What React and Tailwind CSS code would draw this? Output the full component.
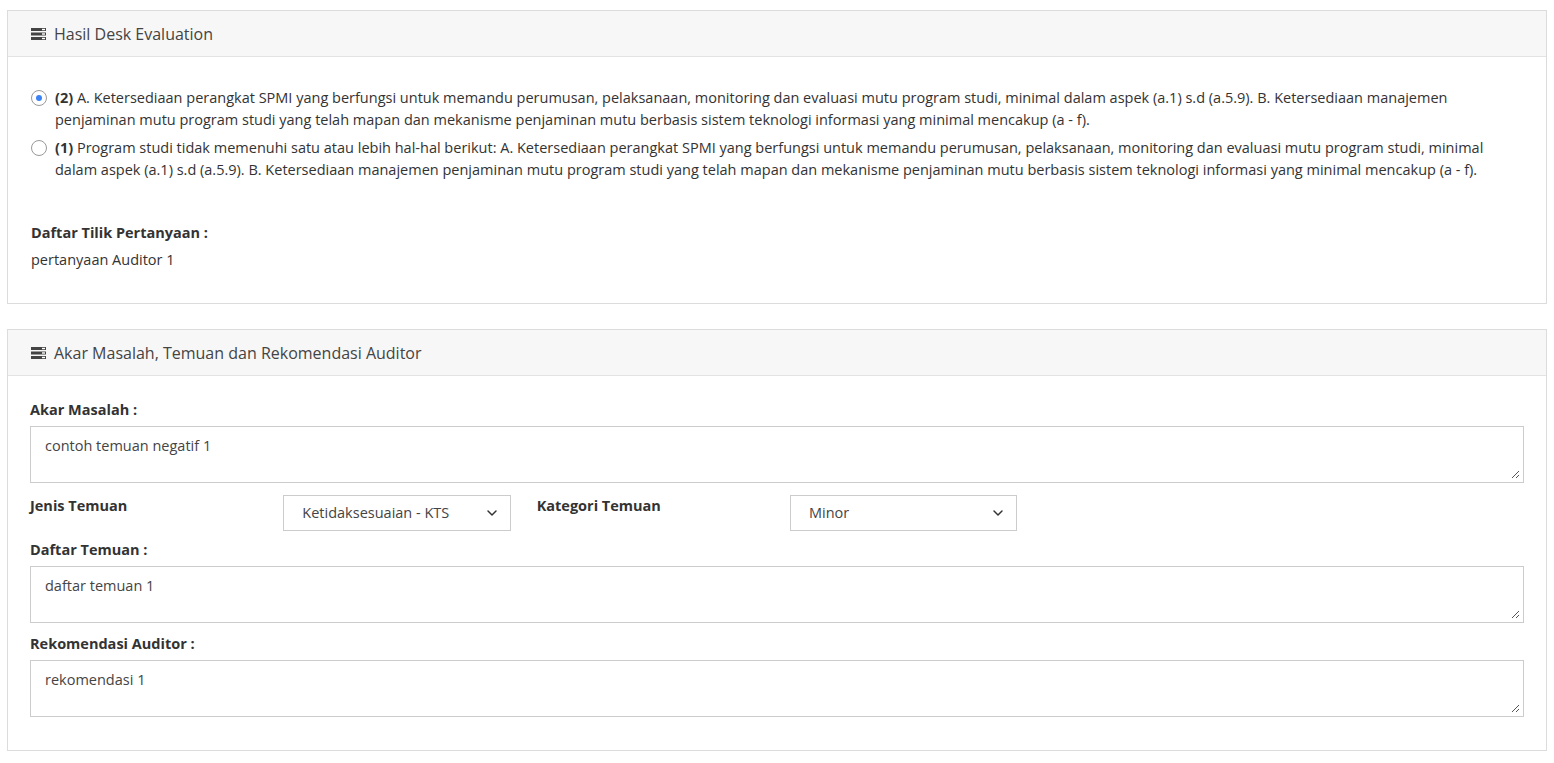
import { ChevronDown } from "lucide-react";

function ListIcon() {
  return (
    <svg width="15" height="12" viewBox="0 0 15 12" className="mr-2 shrink-0">
      <rect x="0" y="0" width="15" height="3" fill="#444" />
      <rect x="0" y="4.5" width="15" height="3" fill="#444" />
      <rect x="0" y="9" width="15" height="3" fill="#444" />
      <rect x="11" y="0.8" width="3" height="1.4" fill="#fff" />
      <rect x="11" y="5.3" width="3" height="1.4" fill="#fff" />
      <rect x="11" y="9.8" width="3" height="1.4" fill="#fff" />
    </svg>
  );
}

function Card({ title, children, className }) {
  return (
    <div className={`mx-[7px] border border-[#dcdcdc] bg-white ${className || ""}`}>
      <div className="flex h-[46px] items-center border-b border-[#e3e3e3] bg-[#f7f7f7] px-[23px] text-[16px] text-[#444]">
        <ListIcon />
        {title}
      </div>
      {children}
    </div>
  );
}

function Radio({ checked, num, text }) {
  return (
    <div className="flex items-start">
      <span className="mr-[8px] mt-[3px] flex h-[16px] w-[16px] shrink-0 items-center justify-center rounded-full border border-[#999] bg-white">
        {checked && <span className="h-[6px] w-[6px] rounded-full bg-[#3b82f6]" />}
      </span>
      <p>
        <span className="font-bold">({num})</span> {text}
      </p>
    </div>
  );
}

function TextArea({ value }) {
  return (
    <div className="relative h-[57px] border border-[#ccc] px-[14px] py-[8px] text-[#444]">
      {value}
      <svg width="9" height="9" viewBox="0 0 9 9" className="absolute bottom-[3px] right-[3px]">
        <path d="M8 1L1 8M8 5L5 8" stroke="#555" strokeWidth="1" />
      </svg>
    </div>
  );
}

function Select({ value }) {
  return (
    <div className="flex h-[36px] items-center justify-between border border-[#ccc] pl-[18px] pr-[10px] text-[#444]">
      {value}
      <ChevronDown size={16} strokeWidth={2.2} className="text-[#333]" />
    </div>
  );
}

export default function App() {
  return (
    <div
      className="bg-white pt-[10px] pb-[12px] text-[14.5px] leading-[22px] text-[#333]"
      style={{ fontFamily: '"Open Sans", sans-serif' }}
    >
      <Card title="Hasil Desk Evaluation">
        <div className="px-[23px] pt-[30px] pb-[32px]">
          <div className="flex flex-col gap-[6px]">
            <Radio
              checked
              num="2"
              text="A. Ketersediaan perangkat SPMI yang berfungsi untuk memandu perumusan, pelaksanaan, monitoring dan evaluasi mutu program studi, minimal dalam aspek (a.1) s.d (a.5.9). B. Ketersediaan manajemen penjaminan mutu program studi yang telah mapan dan mekanisme penjaminan mutu berbasis sistem teknologi informasi yang minimal mencakup (a - f)."
            />
            <Radio
              num="1"
              text="Program studi tidak memenuhi satu atau lebih hal-hal berikut: A. Ketersediaan perangkat SPMI yang berfungsi untuk memandu perumusan, pelaksanaan, monitoring dan evaluasi mutu program studi, minimal dalam aspek (a.1) s.d (a.5.9). B. Ketersediaan manajemen penjaminan mutu program studi yang telah mapan dan mekanisme penjaminan mutu berbasis sistem teknologi informasi yang minimal mencakup (a - f)."
            />
          </div>
          <p className="mt-[41px] font-bold">Daftar Tilik Pertanyaan :</p>
          <p className="mt-[5px]">pertanyaan Auditor 1</p>
        </div>
      </Card>

      <Card title="Akar Masalah, Temuan dan Rekomendasi Auditor" className="mt-[25px]">
        <div className="px-[22px] pt-[23px] pb-[33px]">
          <p className="mb-[5px] font-bold">Akar Masalah :</p>
          <TextArea value="contoh temuan negatif 1" />
          <div className="mt-[12px] grid grid-cols-6 gap-x-[26px]">
            <p className="font-bold">Jenis Temuan</p>
            <Select value="Ketidaksesuaian - KTS" />
            <p className="font-bold">Kategori Temuan</p>
            <Select value="Minor" />
          </div>
          <p className="mt-[8px] mb-[5px] font-bold">Daftar Temuan :</p>
          <TextArea value="daftar temuan 1" />
          <p className="mt-[10px] mb-[5px] font-bold">Rekomendasi Auditor :</p>
          <TextArea value="rekomendasi 1" />
        </div>
      </Card>
    </div>
  );
}
